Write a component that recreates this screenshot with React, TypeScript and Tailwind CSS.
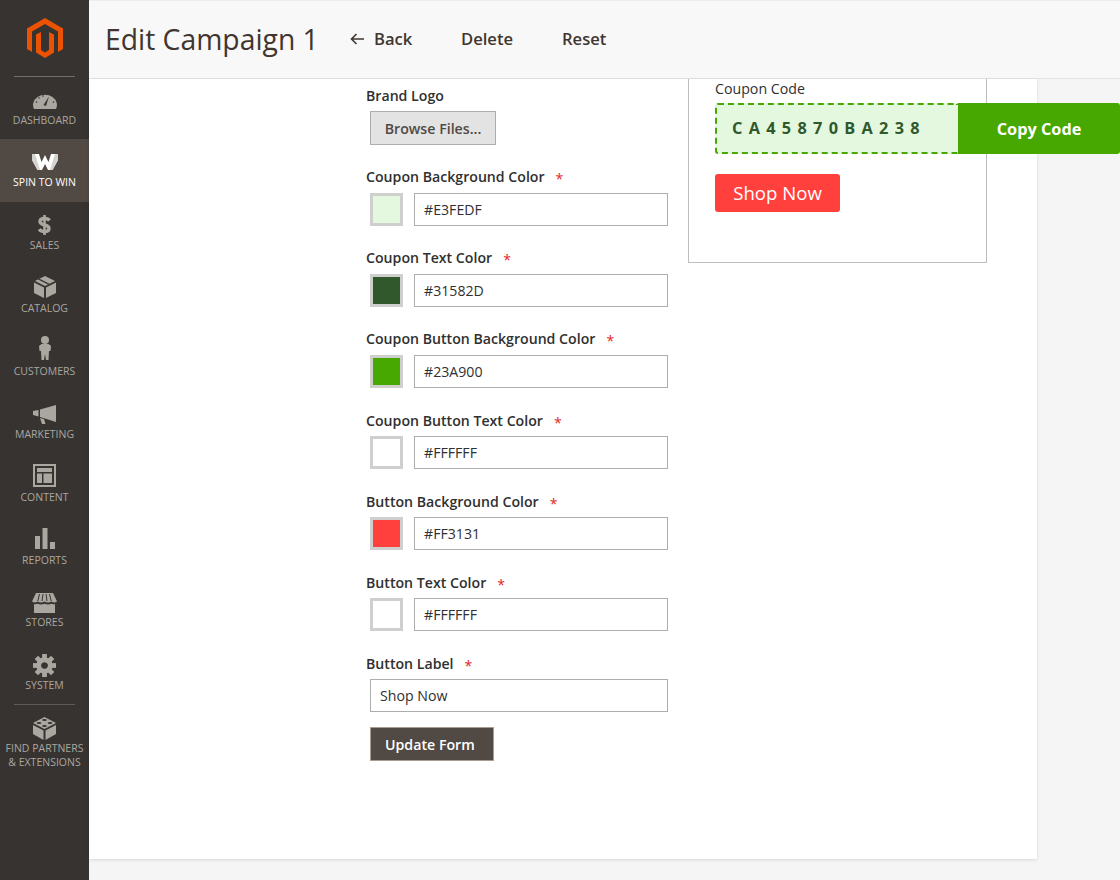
import React from 'react';

const iconFill = '#aaa6a0';

function Logo() {
  return (
    <svg width="36" height="40" viewBox="0 0 36 40" fill="#eb5202">
      <path d="M18 0 L36 10.5 V31 L31 34 V13.5 L18 6 L5 13.5 V34 L0 31 V10.5 Z" />
      <path d="M9 16.5 L14 14 V32 L18 34.5 L22 32 V14 L27 16.5 V34.5 L18 40 L9 34.5 Z" />
    </svg>
  );
}

function Gauge() {
  return (
    <svg width="24" height="16" viewBox="0 0 24 16">
      <path d="M1 16 Q-0.5 13 0.3 10 A12 10.5 0 0 1 23.7 10 Q24.5 13 23 16 Z" fill={iconFill} />
      <path d="M10.5 12 L16 3.5 L13 13 Z" fill="#373330" />
      <g fill="#373330">
        <circle cx="3.5" cy="9" r="0.8" />
        <circle cx="6" cy="5" r="0.8" />
        <circle cx="10" cy="3" r="0.8" />
        <circle cx="20.5" cy="9" r="0.8" />
      </g>
    </svg>
  );
}

function WLogo() {
  return (
    <svg width="26" height="16" viewBox="0 0 26 16">
      <path d="M0 0 H7 L9.5 8 L13 1 L16.5 8 L19 0 H26 V6 L20.5 16 H16 L13 10 L10 16 H5.5 L0 6 Z" fill="#ffffff" />
      <path d="M0 6 L5.5 16 H8 L3 0 H0 Z M26 6 L20.5 16 H18 L23 0 H26 Z" fill="#d5d3d0" />
    </svg>
  );
}

function DollarIcon() {
  return (
    <svg className="mb-[-1px]" width="13" height="20" viewBox="0 0 13 20" fill="none" stroke={iconFill} strokeWidth="3.4">
      <path d="M11.5 5.5 C10.5 4 9 3.5 6.5 3.5 C3.5 3.5 2 4.8 2 6.6 C2 8.8 4 9.4 6.5 10 C9 10.6 11 11.2 11 13.4 C11 15.2 9.5 16.5 6.5 16.5 C4 16.5 2.4 15.8 1.2 14.2" />
      <path d="M6.5 0 V20" strokeWidth="2.6" />
    </svg>
  );
}

function BoxIcon() {
  return (
    <svg className="mb-[-1px]" width="22" height="22" viewBox="0 0 22 22" fill={iconFill}>
      <path d="M11 0 L21 5 L11 10 L1 5 Z" />
      <path d="M5.5 2.7 L15.5 7.7 L14 8.5 L4 3.5 Z" fill="#373330" />
      <path d="M0 6.5 L10 11.5 V22 L0 17 Z" />
      <path d="M22 6.5 L12 11.5 V22 L22 17 Z" />
    </svg>
  );
}

function PersonIcon() {
  return (
    <svg width="12" height="24" viewBox="0 0 12 24" fill={iconFill}>
      <circle cx="6" cy="4" r="4" />
      <path d="M2.5 8 H9.5 L12 10 L11.5 15 H10 L9.5 24 H7 L6 18 L5 24 H2.5 L2 15 H0.5 L0 10 Z" />
    </svg>
  );
}

function MegaphoneIcon() {
  return (
    <svg className="mb-[-1px]" width="23" height="19" viewBox="0 0 23 19" fill={iconFill}>
      <path d="M7 4.5 L23 0 V17 L7 12 Z" />
      <path d="M0 6 L5.5 5 V11.5 L0 10 Z" />
      <path d="M7 13 L11 14 L12.5 19 H9 Z" />
    </svg>
  );
}

function ContentIcon() {
  return (
    <svg className="mb-[-1px]" width="23" height="23" viewBox="0 0 23 23" fill={iconFill}>
      <path d="M0 0 H23 V23 H0 Z M2 2 V21 H21 V2 Z" fillRule="evenodd" />
      <rect x="4" y="4" width="15" height="4" />
      <rect x="4" y="9.5" width="5" height="9.5" />
      <rect x="10.5" y="9.5" width="8.5" height="9.5" />
    </svg>
  );
}

function ReportsIcon() {
  return (
    <svg width="20" height="21" viewBox="0 0 20 21" fill={iconFill}>
      <rect x="0" y="8" width="5" height="13" />
      <rect x="7.5" y="0" width="5" height="21" />
      <rect x="15" y="14" width="5" height="7" />
    </svg>
  );
}

function StoreIcon() {
  return (
    <svg className="mb-[-2px]" width="25" height="20" viewBox="0 0 25 20" fill={iconFill}>
      <path d="M4 0 H21 L25 8.5 Q22 10.5 19.5 8.5 Q16 10.5 12.5 8.5 Q9 10.5 5.5 8.5 Q3 10.5 0 8.5 Z" />
      <path d="M7.5 1 L5.8 8 M11 1 L10 8 M14 1 L15 8 M17.5 1 L19.2 8" stroke="#373330" strokeWidth="1" />
      <path d="M2 11 Q4 11.5 5.5 10.8 Q9 12 12.5 10.8 Q16 12 19.5 10.8 Q21 11.5 23 11 V20 H2 Z" />
    </svg>
  );
}

function GearIcon() {
  return (
    <svg className="mb-[-3px]" width="23" height="23" viewBox="0 0 24 24" fill={iconFill}>
      {[0, 45, 90, 135, 180, 225, 270, 315].map(deg => (
        <rect key={deg} x="9.5" y="0" width="5" height="6" transform={`rotate(${deg} 12 12)`} />
      ))}
      <path
        d="M12 3.5 A8.5 8.5 0 1 1 11.99 3.5 Z M12 8.5 A3.5 3.5 0 1 0 12.01 8.5 Z"
        fillRule="evenodd"
      />
    </svg>
  );
}

function BrickIcon() {
  return (
    <svg width="23" height="23" viewBox="0 0 23 23" fill={iconFill}>
      <path d="M11.5 0 L23 6 L11.5 12 L0 6 Z" />
      <g fill="#373330">
        <ellipse cx="11.5" cy="3" rx="2.4" ry="1" />
        <ellipse cx="6" cy="6" rx="2.4" ry="1" />
        <ellipse cx="17" cy="6" rx="2.4" ry="1" />
        <ellipse cx="11.5" cy="9" rx="2.4" ry="1" />
      </g>
      <path d="M0 8 L10.5 13.5 V23 L0 17 Z" />
      <path d="M23 8 L12.5 13.5 V23 L23 17 Z" />
    </svg>
  );
}

const navItems = [
  { label: 'Dashboard', icon: <Gauge />, box: 'h-[62px]', top: 'h-[32px]' },
  { label: 'Spin to Win', icon: <WLogo />, box: 'h-[63px]', top: 'h-[31px]', active: true },
  { label: 'Sales', icon: <DollarIcon />, box: 'h-[63px]', top: 'h-[32px]' },
  { label: 'Catalog', icon: <BoxIcon />, box: 'h-[63px]', top: 'h-[32px]' },
  { label: 'Customers', icon: <PersonIcon />, box: 'h-[63px]', top: 'h-[32px]' },
  { label: 'Marketing', icon: <MegaphoneIcon />, box: 'h-[63px]', top: 'h-[32px]' },
  { label: 'Content', icon: <ContentIcon />, box: 'h-[63px]', top: 'h-[32px]' },
  { label: 'Reports', icon: <ReportsIcon />, box: 'h-[63px]', top: 'h-[32px]' },
  { label: 'Stores', icon: <StoreIcon />, box: 'h-[62px]', top: 'h-[31px]' },
  { label: 'System', icon: <GearIcon />, box: 'h-[62px]', top: 'h-[32px]' },
];

function NavItem({ item }: { item: (typeof navItems)[number] }) {
  return (
    <div className={`flex flex-col items-center ${item.box} ${item.active ? 'bg-[#514943]' : ''}`}>
      <div className={`flex shrink-0 items-end justify-center ${item.top}`}>{item.icon}</div>
      <span
        className={`text-[10.5px] leading-[14px] uppercase ${item.active ? 'mt-[5px] text-white' : 'mt-[4px] text-[#aaa6a0]'}`}
      >
        {item.label}
      </span>
    </div>
  );
}

function Sidebar() {
  return (
    <aside className="flex h-[880px] w-[89px] shrink-0 flex-col bg-[#373330]">
      <div className="flex h-[76px] shrink-0 justify-center pt-[18px]">
        <Logo />
      </div>
      <div className="mx-[14px] h-px shrink-0 bg-[#736e69]" />
      {navItems.map(item => (
        <NavItem key={item.label} item={item} />
      ))}
      <div className="mx-[14px] h-px shrink-0 bg-[#5f5b56]" />
      <div className="flex flex-col items-center pt-[12px]">
        <BrickIcon />
        <span className="mt-[1px] text-center text-[10.5px] leading-[14px] whitespace-nowrap text-[#aaa6a0] uppercase">
          Find Partners
          <br />& Extensions
        </span>
      </div>
    </aside>
  );
}

function FieldLabel({ text, required, low }: { text: string; required?: boolean; low?: boolean }) {
  return (
    <div className={`h-[20px] text-[14.15px] leading-[20px] font-semibold text-[#303030] ${low ? 'pt-px' : ''}`}>
      {text}
      {required && <span className="ml-[11px] align-[-2px] font-normal text-[#e22626]">*</span>}
    </div>
  );
}

function ColorField({ label, value, swatch, low }: { label: string; value: string; swatch: string; low?: boolean }) {
  return (
    <div className="mb-[22px]">
      <FieldLabel text={label} required low={low} />
      <div className="mt-[6px] ml-[4px] flex gap-[11px]">
        <div className={`h-[33px] w-[33px] border-[3px] border-[#cfd0cd] ${swatch}`} />
        <div className="flex h-[33px] w-[254px] items-center border border-[#adadad] bg-white px-[9px] text-[14.15px] text-[#303030]">
          {value}
        </div>
      </div>
    </div>
  );
}

const colorFields = [
  { label: 'Coupon Background Color', value: '#E3FEDF', swatch: 'bg-[#e3f8df]' },
  { label: 'Coupon Text Color', value: '#31582D', swatch: 'bg-[#31582d]' },
  { label: 'Coupon Button Background Color', value: '#23A900', swatch: 'bg-[#46a800]' },
  { label: 'Coupon Button Text Color', value: '#FFFFFF', swatch: 'bg-white', low: true },
  { label: 'Button Background Color', value: '#FF3131', swatch: 'bg-[#ff403d]', low: true },
  { label: 'Button Text Color', value: '#FFFFFF', swatch: 'bg-white', low: true },
];

function Form() {
  return (
    <div className="w-[302px] shrink-0 pt-[7px]">
      <div className="mb-[22px]">
        <FieldLabel text="Brand Logo" />
        <div className="mt-[5px] ml-[4px] flex h-[34px] w-[126px] items-center justify-center border border-[#adadad] bg-[#e3e3e3] pt-px text-[14.2px] font-semibold text-[#514943]">
          Browse Files...
        </div>
      </div>
      {colorFields.map(f => (
        <ColorField key={f.label} {...f} />
      ))}
      <FieldLabel text="Button Label" required low />
      <div className="mt-[6px] ml-[4px] flex h-[33px] w-[298px] items-center border border-[#adadad] bg-white px-[9px] text-[14.15px] text-[#303030]">
        Shop Now
      </div>
      <div className="mt-[15px] ml-[4px] flex h-[34px] w-[124px] items-center border border-[#a79d95] bg-[#514943] pt-px pl-[14px] text-[14.2px] font-semibold text-white">
        Update Form
      </div>
    </div>
  );
}

function Preview() {
  return (
    <div className="ml-[20px] h-[184px] w-[299px] shrink-0 border-x border-b border-[#bdbdbd] pt-[1px] pl-[26px]">
      <div className="text-[14.2px] leading-[18px] text-[#303030]">Coupon Code</div>
      <div className="mt-[5px] flex h-[51px] w-[405px] text-[16.3px] font-bold">
        <div className="flex w-[243px] shrink-0 items-center rounded-l-[3px] border-2 border-r-0 border-dashed border-[#46a800] bg-[#e3f8df] pl-[15px] tracking-[6.3px] text-[#31582d]">
          CA45870BA238
        </div>
        <div className="flex w-[162px] shrink-0 items-center justify-center rounded-r-[3px] bg-[#46a800] pt-px text-white">
          Copy Code
        </div>
      </div>
      <div className="mt-[20px] flex h-[38px] w-[125px] items-center justify-center rounded-[3px] bg-[#ff403d] text-[18.6px] text-white">
        Shop Now
      </div>
    </div>
  );
}

function BackArrow() {
  return (
    <svg width="14" height="12" viewBox="0 0 14 12" fill="none" stroke="#41362f" strokeWidth="1.6">
      <path d="M14 6 H1.5 M6.5 1 L1.5 6 L6.5 11" />
    </svg>
  );
}

export default function App() {
  return (
    <div className="flex h-[880px] w-[1120px] overflow-hidden bg-[#f5f5f5] [font-family:'Open_Sans',sans-serif]">
      <Sidebar />
      <main className="flex w-[1031px] flex-col">
        <header className="flex h-[79px] shrink-0 items-center border-t border-b border-t-[#ececec] border-b-[#e3e3e3] bg-[#f8f8f8] pb-[2px] pl-[16px] text-[#41362f]">
          <h1 className="w-[245px] text-[28.3px] leading-[38px] whitespace-nowrap">Edit Campaign 1</h1>
          <div className="mt-[2px] flex items-center text-[16.6px] font-semibold">
            <BackArrow />
            <span className="ml-[10px] w-[87px]">Back</span>
            <span className="w-[101px]">Delete</span>
            <span>Reset</span>
          </div>
        </header>
        <div className="flex h-[780px] w-[948px] shrink-0 bg-white pl-[277px] shadow-[0_1px_3px_rgba(0,0,0,0.12)]">
          <Form />
          <Preview />
        </div>
      </main>
    </div>
  );
}
